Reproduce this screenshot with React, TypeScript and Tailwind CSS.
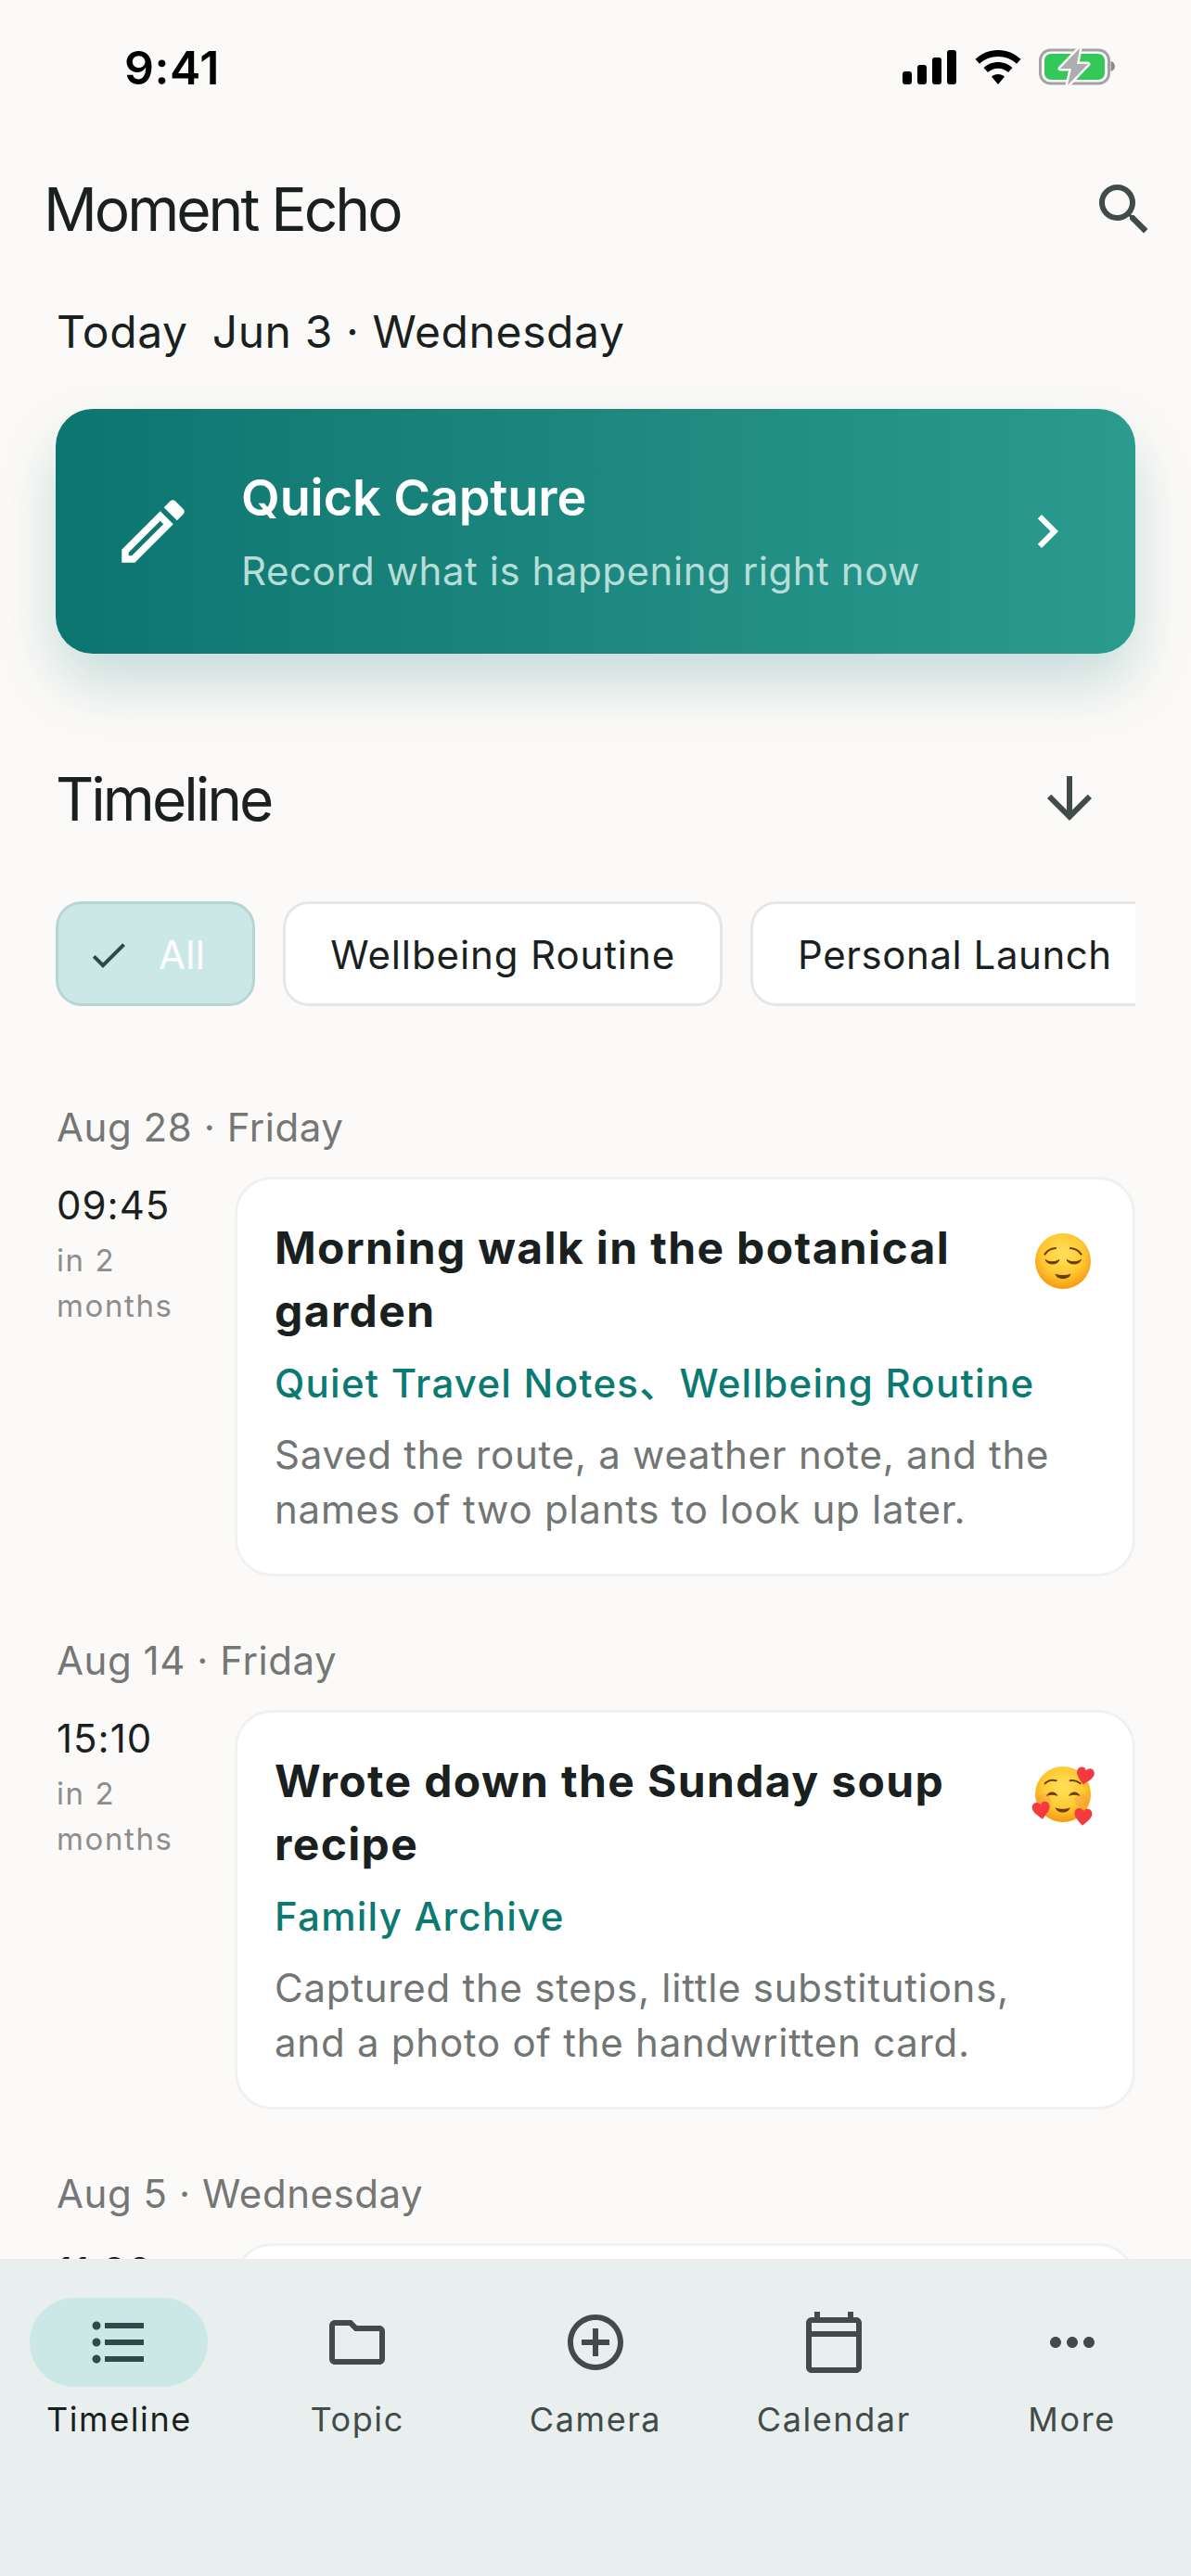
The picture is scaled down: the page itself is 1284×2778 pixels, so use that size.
import type { ReactNode } from "react";

const ICONS = {
  search:
    "M15.5 14h-.79l-.28-.27A6.471 6.471 0 0 0 16 9.5 6.5 6.5 0 1 0 9.5 16c1.61 0 3.09-.59 4.23-1.57l.27.28v.79l5 4.99L20.49 19l-4.99-5zm-6 0C7.01 14 5 11.99 5 9.5S7.01 5 9.5 5 14 7.01 14 9.5 11.99 14 9.5 14z",
  edit: "M14.06 9.02l.92.92L5.92 19H5v-.92l9.06-9.06M17.66 3c-.25 0-.51.1-.7.29l-1.83 1.83 3.75 3.75 1.83-1.83c.39-.39.39-1.02 0-1.41l-2.34-2.34c-.2-.2-.45-.29-.71-.29zm-3.6 3.19L3 17.25V21h3.75L17.81 9.94l-3.75-3.75z",
  chevron: "M10 6L8.59 7.41 13.17 12l-4.58 4.59L10 18l6-6z",
  arrowDown: "M20 12l-1.41-1.41L13 16.17V4h-2v12.17l-5.58-5.59L4 12l8 8 8-8z",
  check: "M9 16.17L4.83 12l-1.42 1.41L9 19 21 7l-1.41-1.41z",
  list: "M4 10.5c-.83 0-1.5.67-1.5 1.5s.67 1.5 1.5 1.5 1.5-.67 1.5-1.5-.67-1.5-1.5-1.5zm0-6c-.83 0-1.5.67-1.5 1.5S3.17 7.5 4 7.5 5.5 6.83 5.5 6 4.83 4.5 4 4.5zm0 12c-.83 0-1.5.68-1.5 1.5s.68 1.5 1.5 1.5 1.5-.68 1.5-1.5-.67-1.5-1.5-1.5zM7 19h14v-2H7v2zm0-6h14v-2H7v2zm0-8v2h14V5H7z",
  folder:
    "M9.17 6l2 2H20v10H4V6h5.17M10 4H4c-1.1 0-1.99.9-1.99 2L2 18c0 1.1.9 2 2 2h16c1.1 0 2-.9 2-2V8c0-1.1-.9-2-2-2h-8l-2-2z",
  addCircle:
    "M13 7h-2v4H7v2h4v4h2v-4h4v-2h-4V7zm-1-5C6.48 2 2 6.48 2 12s4.48 10 10 10 10-4.48 10-10S17.52 2 12 2zm0 18c-4.41 0-8-3.59-8-8s3.59-8 8-8 8 3.59 8 8-3.59 8-8 8z",
  calendar:
    "M20 3h-1V1h-2v2H7V1H5v2H4c-1.1 0-2 .9-2 2v16c0 1.1.9 2 2 2h16c1.1 0 2-.9 2-2V5c0-1.1-.9-2-2-2zm0 2v3H4V5h16zM4 21V10h16v11H4z",
  more: "M6 10c-1.1 0-2 .9-2 2s.9 2 2 2 2-.9 2-2-.9-2-2-2zm12 0c-1.1 0-2 .9-2 2s.9 2 2 2 2-.9 2-2-.9-2-2-2zm-6 0c-1.1 0-2 .9-2 2s.9 2 2 2 2-.9 2-2-.9-2-2-2z",
};

const Icon = ({ d, className }: { d: string; className: string }) => (
  <svg viewBox="0 0 24 24" fill="currentColor" className={className}>
    <path d={d} />
  </svg>
);

const StatusIcons = () => (
  <div className="flex items-center">
    <div className="flex items-end gap-[6px] h-[37px]">
      <div className="w-[10px] h-[14px] rounded-[3px] bg-black" />
      <div className="w-[10px] h-[21px] rounded-[3px] bg-black" />
      <div className="w-[10px] h-[29px] rounded-[3px] bg-black" />
      <div className="w-[10px] h-[37px] rounded-[3px] bg-black" />
    </div>
    <svg viewBox="0 0 50 37" className="w-[50px] h-[37px] ml-[20px]">
      <path d="M25 0C15.5 0 7 3.7.5 9.8L5 14.7C10 10 17.2 7 25 7s15 3 20 7.7l4.500-4.900C43 3.700 34.500 0 25 0Z" />
      <path d="M25 13c-6 0-11.500 2.300-15.500 6l4.500 5c3-2.700 6.800-4.300 11-4.300S33 21.300 36 24l4.500-5C36.500 15.300 31 13 25 13Z" />
      <path d="M25 26c-2.700 0-5.200 1-7 2.700L25 37l7-8.300C30.200 27 27.700 26 25 26Z" />
    </svg>
    <svg viewBox="0 0 82 40" className="w-[82px] h-[40px] ml-[19px]">
      <rect x="1.500" y="2" width="74" height="36" rx="11" fill="none" stroke="#A3A3A3" strokeWidth="3" />
      <path d="M77.500 14c2.800.8 4.500 3 4.500 5.500S80.300 24.200 77.500 25Z" fill="#8C8C8C" />
      <rect x="6" y="6" width="65" height="28" rx="7" fill="#34C759" />
      <path
        d="M44 0 23 22h12l-4 18 22-23H41Z"
        fill="#ADADAD"
        stroke="#FCFAF8"
        strokeWidth="5"
        strokeLinejoin="round"
        paintOrder="stroke"
      />
    </svg>
  </div>
);

const Face = ({ id, children, viewBox }: { id: string; children: ReactNode; viewBox: string }) => (
  <svg viewBox={viewBox} className="w-[70px] h-[70px] shrink-0 mt-[13px] ml-4">
    <defs>
      <radialGradient id={id} cx="50%" cy="38%" r="62%">
        <stop offset="0%" stopColor="#FFE25A" />
        <stop offset="60%" stopColor="#FFC933" />
        <stop offset="100%" stopColor="#F49A12" />
      </radialGradient>
    </defs>
    {children}
  </svg>
);

const Relieved = () => (
  <Face id="relieved" viewBox="-5 -5 70 70">
    <circle cx="30" cy="30" r="30" fill="url(#relieved)" />
    <g fill="none" stroke="#6B3D06" strokeWidth="2.200" strokeLinecap="round">
      <path d="M10.500 22.500C13 18.500 17 16.500 22 16" />
      <path d="M38 16c5 .5 9 2.500 11.500 6.500" />
    </g>
    <path d="M11 28.500c4 3 10.500 3 15 0-1.500 6-13 6-15 0Z" fill="#6B3D06" stroke="#6B3D06" strokeWidth="1" />
    <path d="M34 28.500c4.500 3 11 3 15.500 0-2 6-13.500 6-15.500 0Z" fill="#6B3D06" stroke="#6B3D06" strokeWidth="1" />
    <path d="M21.500 43.500c5 2 12 2 17 0-1.500 7.500-15.500 7.500-17 0Z" fill="#6B3D06" />
  </Face>
);

const Heart = ({ x, y, r }: { x: number; y: number; r: number }) => (
  <path
    transform={`translate(${x} ${y}) rotate(${r})`}
    d="M0 9.500C-3 6-9.500 1.500-9.500-3.500-9.500-7-7-9-4.500-9-2.500-9-1-8 0-6 1-8 2.500-9 4.500-9 7-9 9.500-7 9.500-3.500 9.500 1.500 3 6 0 9.500Z"
    fill="#F23A3F"
  />
);

const SmilingHearts = () => (
  <Face id="hearts" viewBox="-1.700 -3.300 70 70">
    <circle cx="33.300" cy="31.700" r="30" fill="url(#hearts)" />
    <circle cx="13" cy="38" r="7" fill="#F98B4A" opacity=".35" />
    <circle cx="53" cy="38" r="7" fill="#F98B4A" opacity=".35" />
    <g fill="none" stroke="#6B3D06" strokeWidth="2" strokeLinecap="round">
      <path d="M14 20c3-3 8-4 12-3" />
      <path d="M41 17c4-1 8 .5 11 3" />
    </g>
    <path d="M16 33c2-4.500 9-4.500 11 0-3-1.500-8-1.500-11 0Z" fill="#6B3D06" stroke="#6B3D06" strokeWidth="1" />
    <path d="M40 33c2-4.500 9-4.500 11 0-3-1.500-8-1.500-11 0Z" fill="#6B3D06" stroke="#6B3D06" strokeWidth="1" />
    <path d="M25 46c5 2 11 2 16 0-1.500 7-14.500 7-16 0Z" fill="#6B3D06" />
    <Heart x={57} y={12} r={12} />
    <Heart x={10} y={49} r={-8} />
    <Heart x={55} y={56} r={4} />
  </Face>
);

type EntryProps = {
  day: string;
  time: string;
  title?: string;
  tags?: string;
  body?: string;
  emoji?: ReactNode;
};

const Entry = ({ day, time, title, tags, body, emoji }: EntryProps) => (
  <section>
    <div className="h-[56px] leading-[57px] text-[42px] tracking-[0.55px] text-[#757775]">{day}</div>
    <div className="flex mt-[26px]">
      <div className="w-[192px] shrink-0 pt-[5px]">
        <div className="h-[52px] leading-[52px] text-[42px] tracking-[1px] text-[#1A1F1F]">{time}</div>
        <div className="w-[140px] mt-[9px] leading-[49px] text-[33px] tracking-[1.6px] text-[#8C8E8D]">in 2 months</div>
      </div>
      <div className="flex-1 rounded-[40px] border-[3px] border-[#F0F1F0] bg-white pl-[40px] pr-[48px] pt-[40px] pb-[40px]">
        <div className="-mr-[8px] flex justify-between">
          <h3 className="w-[790px] text-[48px] leading-[68px] font-bold tracking-[1.35px] text-[#1A1F1F]">{title}</h3>
          {emoji}
        </div>
        <div className="mt-[16px] leading-[56px] text-[42px] font-medium tracking-[1.25px] text-[#0B7A72]">{tags}</div>
        <p className="mt-[19px] text-[42px] leading-[59px] tracking-[0.75px] text-[#717574]">{body}</p>
      </div>
    </div>
  </section>
);

const tabs = [
  { label: "Timeline", d: ICONS.list, active: true },
  { label: "Topic", d: ICONS.folder },
  { label: "Camera", d: ICONS.addCircle },
  { label: "Calendar", d: ICONS.calendar },
  { label: "More", d: ICONS.more },
];

export default function App() {
  return (
    <div className="flex h-[2778px] w-[1284px] flex-col overflow-hidden bg-[#FCFAF8] font-['Inter','Noto_Sans_CJK_SC',sans-serif]">
      <main className="flex-1 overflow-hidden">
        <div className="flex h-[144px] items-center justify-between pl-[134px] pr-[82px]">
          <span className="pt-[2px] text-[50px] font-semibold tracking-[0.5px] text-black">9:41</span>
          <StatusIcons />
        </div>

        <div className="mt-[26px] flex h-[112px] items-center justify-between pl-[47px] pr-[36px]">
          <h1 className="text-[64px] font-normal tracking-[-3px] text-[#1A1F1F]">Moment Echo</h1>
          <Icon d={ICONS.search} className="h-[72px] w-[72px] text-[#414B49]" />
        </div>

        <div className="mt-[46px] flex h-[60px] items-center gap-[26px] px-[61px] text-[48px] tracking-[0.6px] text-[#1A1F1F]">
          <span>Today</span>
          <span>Jun 3 · Wednesday</span>
        </div>

        <div className="mx-[60px] mt-[53px] flex h-[264px] items-center rounded-[40px] bg-gradient-to-r from-[#0B7570] to-[#2B9B8E] pl-[60px] pr-[59px] shadow-[0_32px_64px_rgba(11,117,112,0.22)]">
          <Icon d={ICONS.edit} className="h-[90px] w-[90px] text-white" />
          <div className="ml-[50px] flex-1 pt-[3px]">
            <div className="text-[54px] leading-[64px] font-semibold tracking-[-0.1px] text-white">Quick Capture</div>
            <div className="mt-[19px] text-[42px] leading-[56px] tracking-[0.55px] text-[#B7DDD8]">
              Record what is happening right now
            </div>
          </div>
          <Icon d={ICONS.chevron} className="h-[72px] w-[72px] text-white" />
        </div>

        <div className="mt-[121px] flex h-[72px] items-center justify-between pl-[60px] pr-[95px]">
          <h2 className="text-[64px] font-normal tracking-[-3px] text-[#1A1F1F]">Timeline</h2>
          <Icon d={ICONS.arrowDown} className="-mt-[2px] h-[72px] w-[72px] text-[#414B49]" />
        </div>

        <div className="mx-[60px] mt-[74px] flex h-[113px] gap-[30px] overflow-hidden">
          <div className="flex shrink-0 items-center rounded-[28px] border-[3px] border-[#B7D6D3] bg-[#CCE8E6] pl-[30px] pr-[51px] pt-[2px]">
            <Icon d={ICONS.check} className="h-[48px] w-[48px] text-[#304A4C]" />
            <span className="ml-[30px] text-[42px] tracking-[0.3px] text-white">All</span>
          </div>
          <div className="flex shrink-0 items-center rounded-[28px] border-[3px] border-[#E6E6E6] bg-white px-[48px] pt-[2px] text-[42px] tracking-[0.9px] text-[#1A1F1F]">
            Wellbeing Routine
          </div>
          <div className="flex shrink-0 items-center rounded-[28px] border-[3px] border-[#E6E6E6] bg-white px-[48px] pt-[2px] text-[42px] tracking-[0.55px] text-[#1A1F1F]">
            Personal Launch
          </div>
        </div>

        <div className="mt-[102px] flex flex-col gap-[62px] pl-[61px] pr-[60px]">
          <Entry
            day="Aug 28 · Friday"
            time="09:45"
            title="Morning walk in the botanical garden"
            tags="Quiet Travel Notes、Wellbeing Routine"
            body="Saved the route, a weather note, and the names of two plants to look up later."
            emoji={<Relieved />}
          />
          <Entry
            day="Aug 14 · Friday"
            time="15:10"
            title="Wrote down the Sunday soup recipe"
            tags="Family Archive"
            body="Captured the steps, little substitutions, and a photo of the handwritten card."
            emoji={<SmilingHearts />}
          />
          <Entry day="Aug 5 · Wednesday" time="11:30" />
        </div>
      </main>

      <nav className="flex h-[342px] shrink-0 bg-[#E9EFEE] pt-[42px]">
        {tabs.map((tab) => (
          <div key={tab.label} className="flex flex-1 flex-col items-center">
            <div
              className={`flex h-[96px] w-[192px] items-center justify-center rounded-full ${
                tab.active ? "bg-[#CCE8E6] text-[#304A4C]" : "text-[#414B49]"
              }`}
            >
              <Icon d={tab.d} className="h-[72px] w-[72px]" />
            </div>
            <span
              className={`mt-[10px] text-[36px] leading-[50px] tracking-[1.6px] ${
                tab.active ? "text-[#1A1F1F]" : "text-[#414B49]"
              }`}
            >
              {tab.label}
            </span>
          </div>
        ))}
      </nav>
    </div>
  );
}
